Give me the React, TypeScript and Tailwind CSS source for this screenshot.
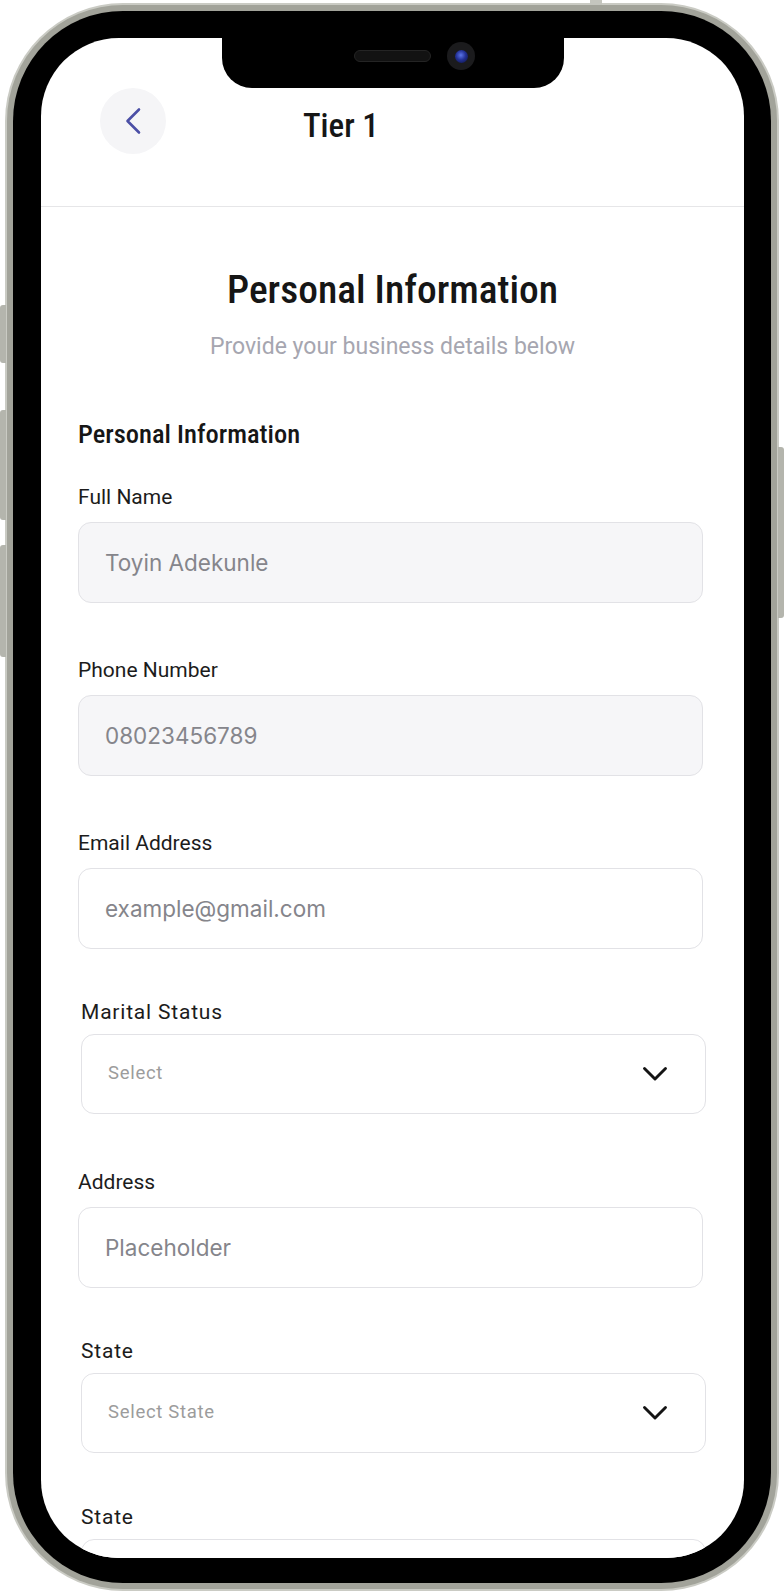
import React from "react";

const ChevronLeft = () => (
  <svg width="18" height="28" viewBox="0 0 18 28" fill="none">
    <path d="M15 2.5 L3.5 14 L15 25.5" stroke="#4b4fa6" strokeWidth="2.6" strokeLinecap="round" strokeLinejoin="round" />
  </svg>
);

const ChevronDown = () => (
  <svg width="26" height="16" viewBox="0 0 26 16" fill="none">
    <path d="M2.5 2.5 L13 13 L23.5 2.5" stroke="#141414" strokeWidth="2.9" strokeLinecap="round" strokeLinejoin="round" />
  </svg>
);

type FieldProps = { label: string; value: string; filled?: boolean; className?: string };

const TextField: React.FC<FieldProps> = ({ label, value, filled, className }) => (
  <div className={`flex flex-col ${className ?? ""}`}>
    <label className="font-['Roboto',sans-serif] text-[21px] leading-[28px] text-[#1c1c1c]">{label}</label>
    <div
      className={`mt-[11px] flex h-[81px] items-center rounded-[13px] border border-[#e2e2e6] px-[26px] ${
        filled ? "bg-[#f6f6f8]" : "bg-white"
      }`}
    >
      <span className="font-['Inter',sans-serif] text-[22.5px] text-[#85858b]">{value}</span>
    </div>
  </div>
);

const SelectField: React.FC<{ label: string; placeholder: string; className?: string }> = ({
  label,
  placeholder,
  className,
}) => (
  <div className={`ml-[3px] flex w-[625px] flex-col ${className ?? ""}`}>
    <label className="font-['Roboto',sans-serif] text-[21px] leading-[28px] tracking-[0.8px] text-[#1c1c1c]">
      {label}
    </label>
    <div className="mt-[8px] flex h-[80px] items-center justify-between rounded-[13px] border border-[#e2e2e6] bg-white pl-[26px] pr-[37px]">
      <span className="font-['Roboto',sans-serif] text-[18.5px] tracking-[0.7px] text-[#9c9c9c]">{placeholder}</span>
      <ChevronDown />
    </div>
  </div>
);

export default function App() {
  return (
    <div className="h-[1595px] w-[784px] overflow-hidden bg-white pl-[5px] pt-[3px]">
      <div className="relative h-[1588px] w-[774px]">
        {/* side buttons */}
        <div className="absolute left-[-5px] top-[302px] h-[58px] w-[6px] rounded-l-[3px] bg-[#b4b5ad]" />
        <div className="absolute left-[-5px] top-[407px] h-[110px] w-[6px] rounded-l-[3px] bg-[#b4b5ad]" />
        <div className="absolute left-[-5px] top-[542px] h-[112px] w-[6px] rounded-l-[3px] bg-[#b4b5ad]" />
        <div className="absolute right-[-5px] top-[444px] h-[171px] w-[6px] rounded-r-[3px] bg-[#b4b5ad]" />
        <div className="absolute left-[585px] top-[-3px] h-[5px] w-[12px] bg-[#c4c5be]" />

        <div className="h-full w-full rounded-[118px] bg-[#cacbc4] p-[2px]">
          <div className="h-full w-full rounded-[116px] bg-[#a2a39a] p-[6px]">
            <div className="h-full w-full rounded-[110px] bg-black pb-[25px] pl-[28px] pr-[27px] pt-[27px]">
              <div className="relative h-full w-full overflow-hidden rounded-[78px] bg-white">
                {/* notch */}
                <div className="absolute left-[181px] top-0 z-10 h-[50px] w-[342px] rounded-b-[30px] bg-black">
                  <div className="absolute left-[132px] top-[12px] h-[12px] w-[77px] rounded-full border border-[#242424] bg-[#121212]" />
                  <div className="absolute left-[225px] top-[4px] flex h-[28px] w-[28px] items-center justify-center rounded-full bg-[#1b1b1d]">
                    <div className="h-[13px] w-[13px] rounded-full bg-[radial-gradient(circle_at_45%_40%,#5b74e8_0%,#233196_45%,#0a0f35_100%)]" />
                  </div>
                </div>

                {/* header */}
                <div className="flex h-[169px] items-start border-b border-[#e6e6e8] pl-[59px] pt-[50px]">
                  <button className="flex h-[66px] w-[66px] items-center justify-center rounded-full bg-[#f5f5f7]">
                    <ChevronLeft />
                  </button>
                  <h1 className="ml-[137px] mt-[18px] font-['Roboto_Condensed',sans-serif] text-[33px] font-medium leading-[40px] text-[#161616]">
                    Tier 1
                  </h1>
                </div>

                {/* body */}
                <div className="flex flex-col pt-[60px]">
                  <h2 className="text-center font-['Roboto_Condensed',sans-serif] text-[39.5px] font-medium leading-[46px] text-[#161616]">
                    Personal Information
                  </h2>
                  <p className="mt-[20px] text-center font-['Roboto',sans-serif] text-[23px] leading-[28px] text-[#a6a6b0]">
                    Provide your business details below
                  </p>

                  <div className="flex w-[662px] flex-col pl-[37px]">
                    <h3 className="mt-[57px] font-['Roboto_Condensed',sans-serif] text-[26.5px] font-medium leading-[32px] text-[#161616]">
                      Personal Information
                    </h3>
                    <TextField className="mt-[33px]" label="Full Name" value="Toyin Adekunle" filled />
                    <TextField className="mt-[53px]" label="Phone Number" value="08023456789" filled />
                    <TextField className="mt-[53px]" label="Email Address" value="example@gmail.com" />
                    <SelectField className="mt-[49px]" label="Marital Status" placeholder="Select" />
                    <TextField className="mt-[54px]" label="Address" value="Placeholder" />
                    <SelectField className="mt-[49px]" label="State" placeholder="Select State" />
                    <SelectField className="mt-[50px]" label="State" placeholder="Select State" />
                  </div>
                </div>
              </div>
            </div>
          </div>
        </div>
      </div>
    </div>
  );
}
